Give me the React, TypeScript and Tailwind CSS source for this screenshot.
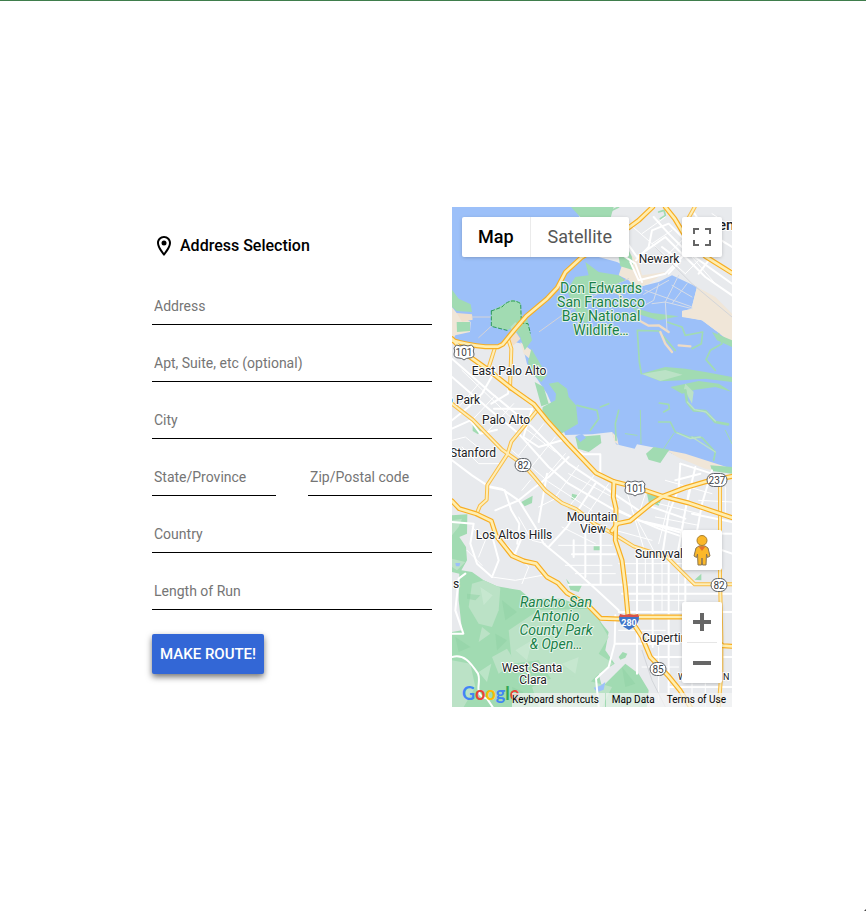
import React from "react";

type FieldProps = { id: string; label: string };

function Field({ id, label }: FieldProps) {
  return (
    <input
      id={id}
      name={id}
      type="text"
      aria-label={label}
      placeholder={label}
      className="block h-[37px] w-full min-w-0 flex-none border-b border-black bg-transparent px-0.5 text-sm text-black outline-none placeholder:text-[#757575]"
    />
  );
}

const freeways = [
  "M0 400 C40 412 70 416 100 419 L138 419 L152 412 L186 370 L222 328 L285 275 L316 242 L340 196 L390 150 L440 120 L530 62 L560 40 L602 0",
  "M0 395 L40 440 L108 488 L180 545 L246 592 L285 640 L350 712 L432 798 L486 824 L550 840 L632 868 L710 888 L840 932",
  "M0 882 L22 905 L72 920 L118 942 L132 985 L180 1046 L216 1062 L252 1070 L285 1110 L318 1128 L345 1158 L405 1192 L446 1234 L500 1236 L530 1230 L700 1230 L780 1290 L812 1316 L840 1318",
  "M486 824 L484 870 L492 905 L490 1000 L510 1060 L520 1140 L528 1225 L570 1290 L595 1350 L650 1408 L684 1450 L715 1500",
  "M480 972 L496 950 L534 942 L600 888 L632 868 L700 842 L768 822 L840 808",
  "M640 0 L668 35 L700 88 L760 148 L840 198",
];

const highways = [
  "M0 590 L62 638 L150 728 L215 774 L240 802 L280 850 L330 888 L372 906 L430 952 L480 978 L545 1018 L600 1036 L645 1050 L728 1132 L840 1132",
  "M252 614 L178 704 L166 742 L106 834 L104 878 L84 896 L74 920",
  "M108 488 L128 425",
  "M168 395 L178 425 L174 545",
  "M700 50 L728 0",
  "M804 834 L804 1110 L808 1290 L808 1400 L800 1500",
];

const streets = [
  "M0 455 L120 560 L240 660 L350 770 L440 830 L560 910",
  "M0 510 L110 605 L200 680 L290 780 L350 830 L480 905 L620 965 L840 1040",
  "M0 640 L50 600 L90 560 L130 490",
  "M0 760 L60 805 L110 838 L150 846 L200 880 L250 960 L275 1010 L345 1068 L435 1150 L500 1210",
  "M126 605 L240 606 M118 590 L168 560 L170 545",
  "M110 840 L158 850 L178 910 L202 950 L196 1010",
  "M200 880 L242 846 L290 810 L350 750",
  "M130 910 L200 880",
  "M345 712 L395 742 L445 742 L445 805",
  "M240 606 L214 690 L260 720 L330 700",
  "M285 800 L260 945 M290 1020 L345 960 L430 830",
  "M0 665 L55 640 L85 680 L135 668",
  "M0 945 L65 950 L55 1010 L75 1070 L120 1110",
  "M120 1110 L140 1060 L120 985 M185 1050 L210 990",
  "M350 1133 L728 1133 M500 1215 L840 1215 M360 1042 L490 1042",
  "M490 905 L560 940 L690 978 L840 980",
  "M490 1225 L488 1310 L470 1380 L432 1415 L440 1500",
  "M446 980 L446 1130 M400 940 L400 1110 M365 1000 L365 1050",
  "M555 1040 L555 1400 M602 1040 L602 1320 M650 1055 L650 1460 M700 1100 L700 1390",
  "M685 770 L680 845 L650 920 L630 1050",
  "M730 780 L700 910 L675 1050",
  "M780 790 L750 890 L730 1000",
  "M685 770 L780 800 M670 820 L745 800 M510 1160 L840 1160",
  "M600 900 L700 935 M580 945 L690 970 M720 920 L840 945",
  "M490 1310 L680 1310 M600 1350 L840 1350 M650 1440 L840 1440",
  "M0 1350 C35 1340 55 1365 78 1400 C90 1430 60 1460 105 1475 L122 1500",
  "M40 1100 L20 1115 L10 1210 L34 1280 L0 1280",
  "M552 160 L590 120 L600 70 L650 50 L720 120",
  "M520 100 L555 150 L640 90 L760 210 L840 265",
  "M535 165 L560 220 L640 200 L690 150",
  "M460 110 L550 170 L570 225",
  "M605 30 L650 80 L700 130 L840 230",
  "M728 20 L760 70 L840 120",
  "M650 200 L685 162 L630 120",
  "M740 200 L770 160 L840 190",
];

const minorStreets = [
  "M20 600 L80 530 M60 640 L130 565 M110 670 L185 590 M200 745 L275 650 M230 790 L310 690 M265 830 L340 740 M310 870 L380 775 M350 900 L430 800 M400 930 L470 830",
  "M30 490 L170 625 L310 735 M180 730 L290 825 L420 910 M350 800 L500 880",
  "M0 700 L40 690 L90 730 M30 720 L80 770 L140 770",
  "M520 840 L580 1040 M540 910 L610 1040 M580 860 L555 940",
  "M490 970 L600 1000 M500 1070 L700 1070 M510 1100 L700 1100 M520 1180 L700 1180",
  "M330 960 L430 1010 M320 1015 L480 1015 M340 1075 L480 1075 M370 1100 L490 1100",
  "M580 1040 L580 1130 M630 1060 L630 1210 M680 1090 L680 1210 M500 1270 L640 1270",
  "M570 1380 L680 1380 M620 1320 L620 1480 M720 1430 L720 1500 M760 1430 L760 1500",
  "M640 820 L780 860 M620 890 L740 920 M610 930 L740 955 M660 850 L620 1010 M710 850 L690 960",
  "M820 840 L820 930 M740 880 L840 885 M750 910 L800 915",
  "M60 960 L100 1000 L80 1050 M150 1000 L230 1080 L210 1130 M200 930 L240 1000 L280 1010",
  "M520 40 L600 110 L700 200 M570 80 L640 30 M600 110 L660 70 M640 150 L700 90 M740 40 L820 110 M780 20 L840 60 M720 150 L790 230 M700 200 L740 160",
  "M120 1110 L190 1120 L270 1105 M45 1030 L90 1075 M210 850 L235 820 M260 900 L320 870",
];

function Terrain() {
  return (
    <svg
      viewBox="0 0 840 1500"
      preserveAspectRatio="xMidYMid slice"
      className="absolute inset-0 h-full w-full"
      aria-hidden="true"
      fill="none"
      strokeLinejoin="round"
      strokeLinecap="round"
    >
      <rect width="840" height="1500" fill="#e8eaed" />

      {/* bay */}
      <path
        fill="#9cc0f9"
        d="M0 0 H370 L395 60 L440 150 L495 165 L525 180 L560 240 L620 225 L660 205 L735 240 L718 306 L690 312 L700 330 L750 340 L790 370 L840 400 V790 L760 775 L660 740 L640 728 L555 712 L548 725 L492 712 L480 675 L420 682 L340 684 L285 560 L225 470 L210 410 L165 400 L130 415 L60 415 L0 400 Z"
      />
      <path fill="#f0e6d8" d="M0 300 L14 318 L56 345 L54 375 L10 385 L0 405 Z" />
      <path fill="#f0e6d8" d="M735 240 L790 270 L840 320 V410 L790 370 L750 340 L690 330 L690 312 L718 306 Z" />
      <path fill="#f0e6d8" d="M525 130 L560 165 L570 205 L640 195 L590 230 L550 245 L530 220 L500 205 Z" />
      <path fill="#f0e6d8" d="M205 405 L238 430 L250 470 L215 440 Z M640 728 L700 740 L840 785 V800 L760 785 L680 752 Z M480 675 L495 690 L500 715 L488 705 Z" />
      <path fill="#f0dfcb" d="M14 318 L60 322 L62 338 L30 344 Z M125 325 L148 330 L122 355 Z M168 380 L192 376 L205 395 L185 415 L165 402 Z" />
      <path stroke="#d6d3d6" strokeWidth="3" d="M60 330 L120 330 M126 350 L80 392 M262 374 L330 325 L470 240 L530 215" />

      {/* wetlands */}
      <g fill="#a1dbb2">
        <path d="M0 248 L20 275 L56 292 L60 315 L14 312 L0 300 Z" />
        <path d="M14 345 L54 345 L54 372 L15 375 Z" />
        <path d="M118 312 L150 295 L180 278 L205 286 L210 330 L195 355 L165 370 L118 358 Z" />
        <path d="M190 370 L225 330 L235 380 L240 400 L218 430 L205 390 Z" />
        <path d="M238 425 L285 505 L268 525 L240 500 L228 465 Z" />
        <path d="M248 525 L275 540 L290 590 L268 598 Z M290 530 L318 525 L345 545 L350 570 L372 595 L378 650 L325 682 L300 650 L270 620 L272 600 L310 580 L312 560 Z" />
        <path d="M370 690 L445 684 L448 708 L410 735 L378 725 Z M582 740 L605 720 L652 728 L625 768 L590 758 Z M775 775 L840 780 V800 L780 792 Z" />
        <path d="M357 0 L485 0 L475 35 L500 85 L520 110 L540 150 L545 190 L505 178 L500 150 L440 120 L385 30 Z" />
        <path d="M400 165 L440 195 L500 205 L520 220 L470 240 L420 260 L400 300 L420 330 L400 350 L370 310 L345 250 L370 210 L410 205 Z" />
        <path d="M568 500 L640 480 L700 485 L760 495 L840 510 V525 L760 515 L690 520 L625 523 Z" />
        <path d="M655 540 L740 522 L800 530 L840 555 L790 540 L730 548 L690 560 Z" />
        <path d="M540 300 L600 318 L680 328 L620 340 L560 322 Z M780 375 L840 400 V420 L795 400 Z" />
        <path d="M208 885 L242 866 L240 888 L218 898 Z M360 860 L376 864 L368 880 L358 876 Z M62 650 L95 660 L78 682 L62 672 Z M585 860 L632 868 L620 896 L590 885 Z M425 1018 L445 1018 L445 1030 L425 1030 Z M728 1118 L748 1100 L748 1120 Z M342 1115 L358 1135 L392 1130 L380 1155 L355 1148 Z" />
      </g>
      <path fill="#bbe2c6" d="M570 501 L640 489 L692 503 L625 522 Z M700 530 L725 555 L720 590 L696 545 Z M175 360 L190 345 L205 360 L185 385 Z" />
      <path stroke="#2c9a5a" strokeWidth="3" strokeDasharray="10 7" d="M118 312 L150 300 C165 282 185 275 206 290 L208 348 L228 350 L235 378 M118 312 L118 358 L165 370" />
      <g stroke="#a1dbb2" strokeWidth="5">
        <path d="M568 500 L562 465 L556 370 L620 372 L670 430 M645 345 L690 360 L700 385 L752 375 L748 410 L720 425" />
        <path d="M800 380 L810 410 L775 430 L762 458 L790 490" />
        <path d="M700 550 L705 585 L725 610 L760 612 L790 645 L828 652" strokeWidth="8" />
        <path d="M622 588 L650 592 L652 605 L635 615 M620 645 L655 645 L670 675 L710 690 L750 692 L790 735 L785 760" />
        <path d="M500 610 L490 650 L492 700 M375 595 L435 610 L440 635 L415 670 M445 600 L470 590" />
        <path d="M565 610 L567 710 M520 680 L555 685 M665 680 L635 725 M820 670 L840 710" strokeWidth="3" />
        <path d="M620 15 L636 10 L640 25 L625 35 M480 10 L500 0" />
      </g>
      <path stroke="#bbe2c6" strokeWidth="4" d="M706 585 L728 608 L762 615 L790 642 M675 678 L715 695 L745 690 M720 690 L790 735" />
      <g stroke="#eedbc6" strokeWidth="7">
        <path d="M560 340 L590 356 L620 355 L650 375 M625 375 L640 410 L660 435 M680 415 L715 418 M455 242 L500 260 L530 300" />
      </g>
      <g stroke="#d5dce8" strokeWidth="3">
        <path d="M580 250 L720 300 M575 262 L650 220 M620 230 L605 280 L560 305 M680 205 L640 285 M705 230 L660 290 M640 285 L645 370 M660 235 L720 270 M600 290 L640 285 L720 305" />
      </g>
      <path fill="#9cc0f9" d="M370 688 L390 680 L402 692 L385 705 Z" />

      {/* foothill parks */}
      <path
        fill="#a1dbb2"
        d="M0 925 L46 922 L45 980 L22 990 L42 1020 L45 1060 L28 1090 L60 1095 L95 1120 L135 1138 L205 1150 L235 1175 L330 1175 L370 1190 L420 1205 L450 1250 L470 1275 L460 1330 L488 1370 L440 1400 L450 1440 L520 1370 L560 1400 L590 1450 L585 1500 L0 1500 Z"
      />
      <g fill="#bbe2c6">
        <path d="M60 1130 L95 1120 L145 1142 L140 1210 L120 1260 L80 1250 L50 1200 Z" />
        <path d="M170 1270 L260 1210 L420 1205 L470 1290 L440 1340 L485 1370 L440 1400 L400 1440 L300 1420 L260 1360 L180 1370 Z" />
        <path d="M0 1360 L55 1370 L70 1440 L35 1500 L0 1500 Z M90 1260 L115 1280 L80 1305 Z M240 1440 L330 1400 L480 1440 L450 1500 L260 1500 Z" />
        <path d="M0 940 L30 935 L20 960 L0 985 Z M0 1055 L40 1065 L15 1090 L0 1080 Z M120 1350 L165 1325 L190 1365 L140 1400 Z" />
      </g>
      <g fill="#cdebd5" fillOpacity="0.6">
        <path d="M85 1140 L122 1165 L95 1195 Z M190 1330 L240 1300 L225 1360 Z M80 1395 L118 1370 L105 1425 Z M330 1370 L380 1350 L370 1400 Z M250 1390 L285 1370 L280 1400 Z" />
      </g>
      <g fill="#8fd2a4" fillOpacity="0.5">
        <path d="M45 1160 L85 1165 L70 1180 L45 1175 Z M150 1180 L195 1215 L160 1240 Z M130 1280 L165 1300 L135 1330 Z M10 1290 L55 1320 L20 1335 Z M180 1440 L215 1455 L190 1485 Z M510 1380 L550 1430 L520 1440 Z" />
      </g>
      <path fill="#e8eaed" d="M0 1095 L22 1100 L20 1180 L30 1270 L0 1275 Z" />
      <path fill="#a1dbb2" d="M500 1350 L512 1335 L526 1340 L520 1352 L505 1358 Z" />
      <path fill="#9cc0f9" d="M425 1442 L445 1436 L460 1425 L455 1448 L435 1456 Z M10 1068 L25 1068 L22 1078 L12 1078 Z" />

      {/* streets */}
      <g stroke="#ffffff">
        {minorStreets.map((d) => (
          <path key={d} d={d} strokeWidth="3" />
        ))}
        {streets.map((d) => (
          <path key={d} d={d} strokeWidth="6" />
        ))}
      </g>
      <path stroke="#d3d5d9" strokeWidth="3" d="M350 905 L470 940 M570 1330 L600 1420 L640 1500 M610 120 L720 230 L840 330" />

      {/* highways */}
      <g stroke="#f9bd45" strokeWidth="12">
        {highways.map((d) => (
          <path key={d} d={d} />
        ))}
      </g>
      <g stroke="#feeeb8" strokeWidth="6">
        {highways.map((d) => (
          <path key={d} d={d} />
        ))}
      </g>
      <g stroke="#f8ae22" strokeWidth="15">
        {freeways.map((d) => (
          <path key={d} d={d} />
        ))}
      </g>
      <g stroke="#ffeeb0" strokeWidth="8">
        {freeways.map((d) => (
          <path key={d} d={d} />
        ))}
      </g>
    </svg>
  );
}

type Label = { x: number; y: number; text: string; anchor?: "start" | "middle" };

const towns: Label[] = [
  { x: 207, y: 56, text: "Newark", anchor: "middle" },
  { x: 57, y: 168, text: "East Palo Alto", anchor: "middle" },
  { x: 4, y: 197, text: "Park" },
  { x: 54, y: 217, text: "Palo Alto", anchor: "middle" },
  { x: -2, y: 250, text: "Stanford" },
  { x: 140, y: 314, text: "Mountain", anchor: "middle" },
  { x: 141, y: 326, text: "View", anchor: "middle" },
  { x: 62, y: 332, text: "Los Altos Hills", anchor: "middle" },
  { x: 183, y: 351, text: "Sunnyvale" },
  { x: 190, y: 435, text: "Cupertino" },
  { x: 80, y: 465, text: "West Santa", anchor: "middle" },
  { x: 81, y: 477, text: "Clara", anchor: "middle" },
  { x: 1, y: 381, text: "s" },
  { x: -6, y: 197, text: "o" },
];

const refuge = ["Don Edwards", "San Francisco", "Bay National", "Wildlife…"];
const park = ["Rancho San", "Antonio", "County Park", "& Open…"];

function RoundShield({ x, y, text }: { x: number; y: number; text: string }) {
  const w = text.length > 2 ? 20 : 16;
  return (
    <g>
      <rect x={x - w / 2} y={y - 6.5} width={w} height="13" rx="6.5" fill="#fff" stroke="#5f6368" />
      <text x={x} y={y + 4} textAnchor="middle" fontSize="10" fill="#3c4043">
        {text}
      </text>
    </g>
  );
}

function UsShield({ x, y }: { x: number; y: number }) {
  return (
    <g>
      <path
        transform={`translate(${x} ${y})`}
        d="M-7.500 -7 Q-4 -5 0 -7 Q4 -5 7.500 -7 L10 -4 Q8.500 -1 10 2 Q10 6 5 6 Q2 6 0 8 Q-2 6 -5 6 Q-10 6 -10 2 Q-8.500 -1 -10 -4 Z"
        fill="#fff"
        stroke="#5f6368"
      />
      <text x={x} y={y + 4} textAnchor="middle" fontSize="10" fill="#3c4043">
        101
      </text>
    </g>
  );
}

function Labels() {
  return (
    <svg className="absolute inset-0 h-full w-full" stroke="none">
      <UsShield x={12} y={145} />
      <UsShield x={183} y={281} />
      <RoundShield x={71} y={258} text="82" />
      <RoundShield x={265} y={273} text="237" />
      <RoundShield x={267} y={378} text="82" />
      <RoundShield x={206} y={462} text="85" />
      <path d="M167 409 Q166 418 177 423 Q188 418 187 409 Z" fill="#3f74c8" />
      <path d="M168 407 L172 408 L177 407 L182 408 L186 407 L187 410 H167 Z" fill="#d9534a" />
      <text x="177" y="419" textAnchor="middle" fontSize="9" fontWeight="700" fill="#fff">
        280
      </text>

      <g fontSize="12" fill="#202124" stroke="#fff" strokeWidth="2" strokeLinejoin="round" paintOrder="stroke">
        {towns.map((t) => (
          <text key={t.text} x={t.x} y={t.y} textAnchor={t.anchor ?? "start"}>
            {t.text}
          </text>
        ))}
        <text x="226" y="473" fontSize="9">
          W
        </text>
        <text x="271" y="473" fontSize="9">
          N
        </text>
        <text x="266" y="23" fontSize="15" fontWeight="500">
          em
        </text>
      </g>
      <g fontSize="14" fill="#188048" stroke="#e6f4ea" strokeWidth="2" strokeLinejoin="round" paintOrder="stroke" textAnchor="middle">
        {refuge.map((line, i) => (
          <text key={line} x="149" y={86 + i * 14}>
            {line}
          </text>
        ))}
        {park.map((line, i) => (
          <text key={line} x="104" y={400 + i * 14} fontStyle="italic">
            {line}
          </text>
        ))}
      </g>
    </svg>
  );
}

function GoogleMark() {
  return (
    <a
      href="#google"
      aria-label="Google"
      className="absolute bottom-0.5 left-2.5 flex h-6 items-center font-['Lato',sans-serif] text-lg font-bold leading-6"
    >
      <span className="text-[#4285f4]">G</span>
      <span className="text-[#ea4335]">o</span>
      <span className="text-[#fbbc04]">o</span>
      <span className="text-[#4285f4]">g</span>
      <span className="text-[#34a853]">l</span>
      <span className="text-[#ea4335]">e</span>
    </a>
  );
}

function MapPanel() {
  const control = "absolute right-2.5 flex w-10 items-center justify-center rounded-xs bg-white shadow-[0_1px_4px_-1px_rgba(0,0,0,0.3)]";
  return (
    <section aria-label="Map" className="relative h-[500px] w-[280px] shrink-0 overflow-hidden bg-[#e8eaed]">
      <Terrain />
      <Labels />

      <div className="absolute left-2.5 top-2.5 flex h-10 rounded-xs bg-white text-lg shadow-[0_1px_4px_-1px_rgba(0,0,0,0.3)]">
        <button type="button" className="border-r border-[#ebebeb] px-4 font-medium text-black">
          Map
        </button>
        <button type="button" className="px-[17px] text-[#565656]">
          Satellite
        </button>
      </div>

      <button type="button" aria-label="Toggle fullscreen view" className={`${control} top-2.5 h-10`}>
        <svg width="18" height="18" viewBox="0 0 18 18" fill="#666">
          <path d="M0 0v6h2V2h4V0H0zm16 0h-4v2h4v4h2V0h-2zm0 16h-4v2h6v-6h-2v4zM2 12H0v6h6v-2H2v-4z" />
        </svg>
      </button>

      <button type="button" aria-label="Drag Pegman onto the map" className={`${control} top-[323px] h-10`}>
        <svg width="18" height="32" viewBox="0 0 18 32" strokeLinejoin="round">
          <path
            d="M6 12 H12 L15 14 L17 22 L14.500 23.500 L13.500 20 L13 31 H9.500 L9 24 L8.500 31 H5 L4.500 20 L3.500 23.500 L1 22 L3 14 Z"
            fill="#fbb829"
            stroke="#8a7550"
          />
          <path d="M5.500 12.500 H12.500 L9 17 Z" fill="#e8722c" />
          <circle cx="9" cy="6.500" r="5" fill="#fbb829" stroke="#a98030" />
        </svg>
      </button>

      <div className={`${control} bottom-6 h-[81px] flex-col`}>
        <button type="button" aria-label="Zoom in" className="flex h-10 w-10 items-center justify-center">
          <svg width="18" height="18" viewBox="0 0 18 18" fill="#666">
            <path d="M7 0h4v7h7v4h-7v7H7v-7H0V7h7z" />
          </svg>
        </button>
        <div className="h-px w-[30px] bg-[#e6e6e6]" />
        <button type="button" aria-label="Zoom out" className="flex h-10 w-10 items-center justify-center">
          <svg width="18" height="18" viewBox="0 0 18 18" fill="#666">
            <path d="M0 7h18v4H0z" />
          </svg>
        </button>
      </div>

      <GoogleMark />
      <div className="absolute bottom-0 right-0 flex h-3.5 items-center whitespace-nowrap text-[10px] leading-[14px] text-black">
        <button type="button" className="h-3.5 bg-[#f5f5f5]/70 pr-1.5">
          Keyboard shortcuts
        </button>
        <button type="button" className="ml-px h-3.5 bg-[#f5f5f5]/70 px-1.5">
          Map Data
        </button>
        <a href="#terms" className="h-3.5 bg-[#f5f5f5]/70 px-1.5">
          Terms of Use
        </a>
      </div>
    </section>
  );
}

function AddressForm() {
  return (
    <form className="flex w-[280px] shrink-0 flex-col pb-1.5" onSubmit={(e) => e.preventDefault()}>
      <h1 className="flex h-6 items-center gap-1 text-base font-medium text-black">
        <svg width="24" height="24" viewBox="0 0 24 24" fill="#000" aria-hidden="true">
          <path d="M12 2C8.130 2 5 5.130 5 9c0 5.250 7 13 7 13s7-7.750 7-13c0-3.870-3.130-7-7-7zM7 9c0-2.760 2.240-5 5-5s5 2.240 5 5c0 2.880-2.880 7.190-5 9.880C9.920 16.210 7 11.850 7 9z" />
          <circle cx="12" cy="9" r="2.500" />
        </svg>
        Address Selection
      </h1>
      <div className="mt-[30px] flex flex-col gap-5">
        <Field id="address" label="Address" />
        <Field id="unit" label="Apt, Suite, etc (optional)" />
        <Field id="city" label="City" />
        <div className="grid grid-cols-2 gap-8">
          <Field id="state" label="State/Province" />
          <Field id="zip" label="Zip/Postal code" />
        </div>
        <Field id="country" label="Country" />
        <Field id="length" label="Length of Run" />
      </div>
      <button
        type="submit"
        className="mt-6 h-10 self-start rounded-xs bg-[#3367d6] px-2 text-[15px] font-medium text-white shadow-[0_3px_6px_rgba(0,0,0,0.55)]"
      >
        MAKE ROUTE!
      </button>
    </form>
  );
}

export default function App() {
  return (
    <main className="relative flex min-h-screen items-center justify-center border-t border-[#3f7d4c] bg-white pl-[18px] pt-0.5 font-['Roboto',sans-serif]">
      <div className="flex items-center gap-5">
        <AddressForm />
        <MapPanel />
      </div>
      <svg className="absolute bottom-0 right-0" width="2" height="2" viewBox="0 0 2 2" aria-hidden="true">
        <path d="M2 0V2H0Z" fill="#444" />
      </svg>
    </main>
  );
}
